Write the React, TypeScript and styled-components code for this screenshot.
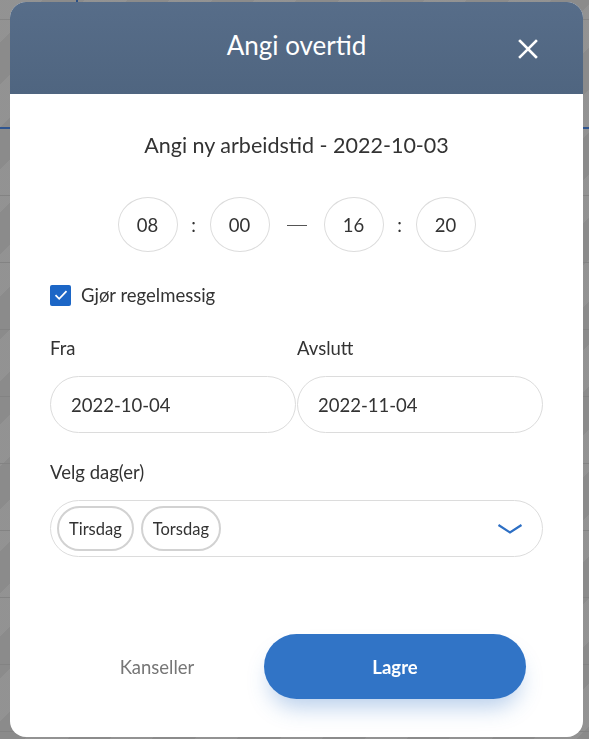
import styled, { createGlobalStyle } from 'styled-components';

const GlobalStyle = createGlobalStyle`
  html, body {
    margin: 0;
    padding: 0;
  }
  body {
    font-family: Lato, 'Open Sans', 'Liberation Sans', sans-serif;
    background: #8d8d8d;
  }
  * {
    box-sizing: border-box;
  }
`;

const days = ['Tirsdag', 'Torsdag'];

export default function App() {
  return (
    <>
      <GlobalStyle />
      <Page>
        <PageTop>
          <TopMarker />
          <TopTime>00:00</TopTime>
        </PageTop>
        <AccentLine />
        {Array.from({ length: 9 }).map((_, i) => (
          <PageRow key={i} />
        ))}
      </Page>
      <Overlay>
        <Modal>
          <Header>
            <Title>Angi overtid</Title>
            <CloseButton aria-label="Lukk">
              <svg width="20" height="20" viewBox="0 0 20 20">
                <path
                  d="M2 2 L18 18 M18 2 L2 18"
                  stroke="#fff"
                  strokeWidth="2.6"
                  strokeLinecap="square"
                />
              </svg>
            </CloseButton>
          </Header>
          <Body>
            <Subtitle>Angi ny arbeidstid - 2022-10-03</Subtitle>
            <TimeRow>
              <TimeBox>08</TimeBox>
              <Separator width={32}>:</Separator>
              <TimeBox>00</TimeBox>
              <Separator width={54}>
                <Dash />
              </Separator>
              <TimeBox>16</TimeBox>
              <Separator width={32}>:</Separator>
              <TimeBox>20</TimeBox>
            </TimeRow>
            <CheckRow>
              <CheckBox>
                <svg width="16" height="16" viewBox="0 0 16 16">
                  <path
                    d="M2.5 8.2 L6.2 11.8 L13.5 4.2"
                    stroke="#fff"
                    strokeWidth="1.8"
                    fill="none"
                  />
                </svg>
              </CheckBox>
              <CheckLabel>Gjør regelmessig</CheckLabel>
            </CheckRow>
            <DateGrid>
              <Field>
                <Label>Fra</Label>
                <DateInput>2022-10-04</DateInput>
              </Field>
              <Field>
                <Label>Avslutt</Label>
                <DateInput>2022-11-04</DateInput>
              </Field>
            </DateGrid>
            <Field>
              <Label>Velg dag(er)</Label>
              <Select>
                <ChipList>
                  {days.map((day) => (
                    <Chip key={day}>{day}</Chip>
                  ))}
                </ChipList>
                <svg width="26" height="12" viewBox="0 0 26 12">
                  <path
                    d="M1.5 2 L13 9.5 L24.5 2"
                    stroke="#2d6fc4"
                    strokeWidth="2.2"
                    fill="none"
                  />
                </svg>
              </Select>
            </Field>
          </Body>
          <Footer>
            <CancelButton>Kanseller</CancelButton>
            <SaveButton>Lagre</SaveButton>
          </Footer>
        </Modal>
      </Overlay>
    </>
  );
}

const Page = styled.div`
  height: 739px;
  overflow: hidden;
  background-color: #8f8f8f;
  background-image: repeating-linear-gradient(
    135deg,
    rgba(255, 255, 255, 0.03) 0px,
    rgba(255, 255, 255, 0.03) 30px,
    rgba(0, 0, 0, 0.03) 30px,
    rgba(0, 0, 0, 0.03) 60px
  );
`;

const PageTop = styled.div`
  display: flex;
  align-items: flex-start;
  gap: 12px;
  height: 20px;
  padding-left: 76px;
  border-bottom: 1px solid #858585;
`;

const TopMarker = styled.div`
  width: 2px;
  height: 20px;
  background: #2a4f86;
`;

const TopTime = styled.span`
  font-size: 11px;
  line-height: 11px;
  color: #7a7a7a;
`;

const AccentLine = styled.div`
  margin-top: 107px;
  height: 2px;
  background: #2f5590;
`;

const PageRow = styled.div`
  height: 67px;
  border-bottom: 1px solid #838383;
`;

const Overlay = styled.div`
  position: fixed;
  inset: 0;
  padding: 2px 6px 0 10px;
`;

const Modal = styled.div`
  width: 573px;
  height: 735px;
  background: #fff;
  border-radius: 16px;
  overflow: hidden;
  display: flex;
  flex-direction: column;
`;

const Header = styled.header`
  position: relative;
  height: 92px;
  flex-shrink: 0;
  display: flex;
  align-items: center;
  justify-content: center;
  background: linear-gradient(180deg, #576d89 0%, #4f6580 100%);
`;

const Title = styled.h1`
  margin: 0 0 6px;
  font-size: 26px;
  font-weight: 400;
  color: #fff;
`;

const CloseButton = styled.button`
  position: absolute;
  right: 45px;
  top: 37px;
  padding: 0;
  border: none;
  background: none;
  display: flex;
`;

const Body = styled.div`
  padding: 0 40px;
  display: flex;
  flex-direction: column;
  color: #333;
`;

const Subtitle = styled.h2`
  margin: 39px 0 0;
  text-align: center;
  font-size: 21.5px;
  font-weight: 400;
  line-height: 24px;
  color: #333;
`;

const TimeRow = styled.div`
  margin-top: 40px;
  display: flex;
  justify-content: center;
  align-items: center;
`;

const TimeBox = styled.div`
  width: 60px;
  height: 55px;
  border: 1px solid #dcdcdc;
  border-radius: 50%;
  display: flex;
  align-items: center;
  justify-content: center;
  font-size: 18.5px;
  color: #333;
`;

const Separator = styled.span<{ width: number }>`
  width: ${({ width }) => width}px;
  display: flex;
  justify-content: center;
  font-size: 18.5px;
  color: #333;
`;

const Dash = styled.span`
  width: 20px;
  height: 1.5px;
  margin-top: 2px;
  background: #555;
`;

const CheckRow = styled.div`
  margin-top: 32px;
  display: flex;
  align-items: center;
  gap: 10px;
`;

const CheckBox = styled.div`
  width: 21px;
  height: 21px;
  border-radius: 2px;
  background: #1c66c6;
  display: flex;
  align-items: center;
  justify-content: center;
`;

const CheckLabel = styled.span`
  font-size: 18.5px;
  color: #333;
`;

const DateGrid = styled.div`
  margin-top: 31px;
  display: grid;
  grid-template-columns: 1fr 1fr;
  gap: 1px;
  margin-bottom: 28px;
`;

const Field = styled.div`
  display: flex;
  flex-direction: column;
`;

const Label = styled.label`
  font-size: 18.5px;
  line-height: 22px;
  color: #333;
  margin-bottom: 17px;
`;

const DateInput = styled.div`
  height: 57px;
  border: 1px solid #dcdcdc;
  border-radius: 29px;
  padding: 0 20px;
  display: flex;
  align-items: center;
  font-size: 18.5px;
  color: #333;
`;

const Select = styled.div`
  height: 57px;
  border: 1px solid #dcdcdc;
  border-radius: 29px;
  padding: 0 19px 0 6px;
  display: flex;
  align-items: center;
  justify-content: space-between;
`;

const ChipList = styled.div`
  display: flex;
  gap: 7px;
`;

const Chip = styled.span`
  height: 45px;
  padding: 0 10px;
  border: 2px solid #d2d2d2;
  border-radius: 23px;
  display: flex;
  align-items: center;
  font-size: 16.5px;
  color: #333;
`;

const Footer = styled.footer`
  margin-top: auto;
  margin-bottom: 38px;
  padding: 0 57px 0 40px;
  display: flex;
  align-items: center;
`;

const CancelButton = styled.button`
  flex: 1;
  border: none;
  background: none;
  font-family: inherit;
  font-size: 18.5px;
  color: #767676;
  padding: 0;
`;

const SaveButton = styled.button`
  width: 262px;
  height: 65px;
  border: none;
  border-radius: 33px;
  background: #3174c6;
  color: #fff;
  font-family: inherit;
  font-size: 18.5px;
  font-weight: 700;
  box-shadow: 0 14px 22px -6px rgba(49, 116, 198, 0.35);
`;
